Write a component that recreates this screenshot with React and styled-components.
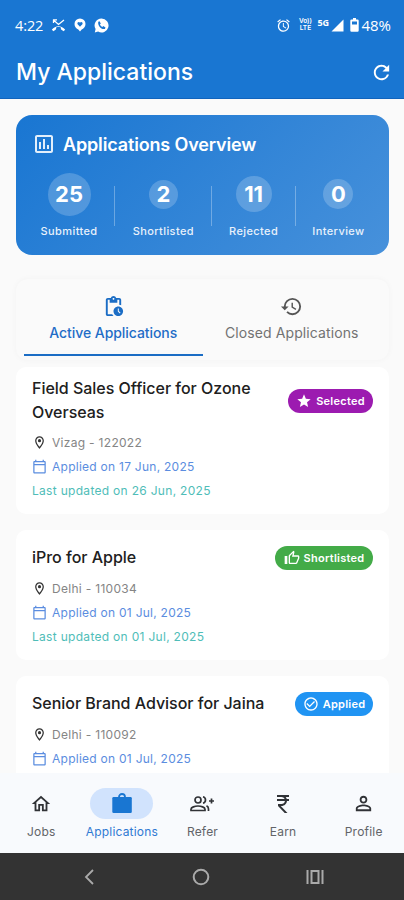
import React from "react";
import styled, { createGlobalStyle, css } from "styled-components";
import {
  MdAccessAlarm,
  MdCheckCircleOutline,
  MdCurrencyRupee,
  MdHistory,
  MdOutlineAssessment,
  MdOutlineCalendarToday,
  MdOutlineHome,
  MdOutlineLocationOn,
  MdOutlineThumbUp,
  MdPendingActions,
  MdPersonOutline,
  MdRefresh,
  MdStar,
} from "react-icons/md";

const stats = [
  { value: 25, label: "Submitted", size: 43, width: 58 },
  { value: 2, label: "Shortlisted", size: 29, width: 64 },
  { value: 11, label: "Rejected", size: 36, width: 50 },
  { value: 0, label: "Interview", size: 30, width: 53 },
];

const applications = [
  {
    title: "Field Sales Officer for Ozone Overseas",
    place: "Vizag - 122022",
    applied: "17 Jun, 2025",
    updated: "26 Jun, 2025",
    status: "Selected",
    icon: <MdStar size={16} />,
    color: "#9c1bb0",
    badgeWidth: 85,
  },
  {
    title: "iPro for Apple",
    place: "Delhi - 110034",
    applied: "01 Jul, 2025",
    updated: "01 Jul, 2025",
    status: "Shortlisted",
    icon: <MdOutlineThumbUp size={16} />,
    color: "#43ab48",
    badgeWidth: 98,
  },
  {
    title: "Senior Brand Advisor for Jaina",
    place: "Delhi - 110092",
    applied: "01 Jul, 2025",
    status: "Applied",
    icon: <MdCheckCircleOutline size={16} />,
    color: "#2094f3",
    badgeWidth: 78,
  },
];

const BagIcon = () => (
  <svg width="24" height="24" viewBox="0 0 24 24">
    <path d="M9 7V5a3 3 0 0 1 6 0v2" fill="none" stroke="currentColor" strokeWidth="1.800" />
    <rect x="2.300" y="5" width="19.500" height="16" rx="1.200" fill="currentColor" />
  </svg>
);

const ReferIcon = () => (
  <svg width="26" height="24" viewBox="0 0 26 24" fill="none" stroke="currentColor" strokeWidth="1.700">
    <circle cx="9" cy="8" r="3" />
    <path d="M2 18.500v-1.300c0-2 4-3.200 7-3.200s7 1.200 7 3.200v1.300z" />
    <path d="M14 4.800a3.300 3.300 0 0 1 0 6.400M17.500 13.800c1.400.7 2 1.800 2 3.200v2" />
    <path d="M22.500 6.500v5M20 9h5" />
  </svg>
);

const navItems = [
  { label: "Jobs", icon: <MdOutlineHome size={22} /> },
  { label: "Applications", icon: <BagIcon />, active: true },
  { label: "Refer", icon: <ReferIcon /> },
  { label: "Earn", icon: <MdCurrencyRupee size={24} /> },
  { label: "Profile", icon: <MdPersonOutline size={23} /> },
];

const MissedCallIcon = () => (
  <svg width="15" height="14" viewBox="0 0 15 14" fill="none" stroke="#fff">
    <path d="M2.500 1.500v3.500M2 1.800H6M2.500 2l5 4.500L13 2" strokeWidth="1.300" />
    <path
      d="M.8 11.800l1.700 1.500 2.600-2V9.500c1.500-.6 3.300-.6 4.800 0v1.800l2.600 2 1.700-1.500C10.600 7 4.400 7 .8 11.800z"
      fill="#fff"
      stroke="none"
    />
  </svg>
);

const ChatPinIcon = () => (
  <svg width="12" height="14" viewBox="0 0 12 14">
    <path
      d="M6 .5a5.500 5.500 0 0 1 5.500 5.500c0 3-2 4.800-3.800 5.400L6 13.500l-1.700-2.100C2.500 10.800.5 9 .5 6A5.500 5.500 0 0 1 6 .5z"
      fill="#fff"
    />
    <path d="M6 8.700 3.600 6.300a1.400 1.400 0 0 1 2.400-1.500 1.400 1.400 0 0 1 2.400 1.500z" fill="#1976d2" />
  </svg>
);

const PhoneCircleIcon = () => (
  <svg width="15" height="15" viewBox="0 0 15 15">
    <path d="M7.500.5a7 7 0 1 1-3.400 13.100L.8 14.500l.8-3.400A7 7 0 0 1 7.500.5z" fill="#fff" />
    <path
      d="M4.300 3.800 5.500 3.200l1.300 2.300-.9 1c.5 1.100 1.300 1.900 2.400 2.500l1-.9 2.200 1.300-.6 1.500c-3.200 1.200-7.600-3.200-6.600-7.100z"
      fill="#1976d2"
    />
  </svg>
);

const BatteryIcon = () => (
  <svg width="9" height="14" viewBox="0 0 9 14">
    <path
      fill="#fff"
      fillRule="evenodd"
      d="M3 0h3v1.500h1.500A1.200 1.200 0 0 1 8.700 2.700v9.800a1.200 1.200 0 0 1-1.200 1.200h-6A1.200 1.200 0 0 1 .3 12.500V2.700a1.200 1.200 0 0 1 1.200-1.200H3zM2 3.500v3h5v-3z"
    />
  </svg>
);

const App = () => {
  return (
    <>
      <GlobalStyle />
      <Screen>
        <Header>
          <StatusBar>
            <StatusLeft>
              <Clock>4:22</Clock>
              <MissedCallIcon />
              <ChatPinIcon />
              <PhoneCircleIcon />
            </StatusLeft>
            <StatusRight>
              <MdAccessAlarm size={15} />
              <Volte>
                <span>Vo))</span>
                <span>LTE</span>
              </Volte>
              <FiveG>5G</FiveG>
              <svg width="13" height="13" viewBox="0 0 13 13">
                <path d="M12.500.5v12H.5z" fill="#fff" />
              </svg>
              <Battery>
                <BatteryIcon />
                <span>48%</span>
              </Battery>
            </StatusRight>
          </StatusBar>
          <AppBar>
            <PageTitle>My Applications</PageTitle>
            <MdRefresh size={23} />
          </AppBar>
        </Header>

        <Body>
          <Overview>
            <OverviewTitle>
              <MdOutlineAssessment size={24} />
              <span>Applications Overview</span>
            </OverviewTitle>
            <Stats>
              {stats.map((stat, i) => (
                <React.Fragment key={stat.label}>
                  {i > 0 && <Divider />}
                  <Stat $width={stat.width}>
                    <Bubble>
                      <Circle $size={stat.size}>{stat.value}</Circle>
                    </Bubble>
                    <StatLabel>{stat.label}</StatLabel>
                  </Stat>
                </React.Fragment>
              ))}
            </Stats>
          </Overview>

          <Tabs>
            <Tab $active>
              <MdPendingActions size={23} />
              <span>Active Applications</span>
            </Tab>
            <Tab>
              <MdHistory size={23} />
              <span>Closed Applications</span>
            </Tab>
          </Tabs>

          <List>
            {applications.map((item, i) => (
              <Card key={item.title} $first={i === 0}>
                <CardHead>
                  <JobTitle>{item.title}</JobTitle>
                  <Badge $color={item.color} $width={item.badgeWidth}>
                    {item.icon}
                    <span>{item.status}</span>
                  </Badge>
                </CardHead>
                <Place>
                  <MdOutlineLocationOn size={15} />
                  <span>{item.place}</span>
                </Place>
                <Applied>
                  <MdOutlineCalendarToday size={15} />
                  <span>Applied on {item.applied}</span>
                </Applied>
                {item.updated && (
                  <Updated>Last updated on {item.updated}</Updated>
                )}
              </Card>
            ))}
          </List>
        </Body>

        <Nav>
          {navItems.map((item) => (
            <NavItem key={item.label} $active={item.active}>
              <NavPill $active={item.active}>{item.icon}</NavPill>
              <span>{item.label}</span>
            </NavItem>
          ))}
        </Nav>

        <SystemBar>
          <svg width="12" height="18" viewBox="0 0 12 18">
            <path d="M10 2 3 9l7 7" fill="none" stroke="currentColor" strokeWidth="1.800" />
          </svg>
          <svg width="18" height="18" viewBox="0 0 18 18">
            <circle cx="9" cy="9" r="7.300" fill="none" stroke="currentColor" strokeWidth="2" />
          </svg>
          <svg width="18" height="16" viewBox="0 0 18 16">
            <path
              d="M1.500 1v14M16.500 1v14M5.500 2h7v12h-7z"
              fill="none"
              stroke="currentColor"
              strokeWidth="2"
            />
          </svg>
        </SystemBar>
      </Screen>
    </>
  );
};

export default App;

const GlobalStyle = createGlobalStyle`
  * {
    box-sizing: border-box;
  }
  body {
    margin: 0;
    font-family: Inter, "Liberation Sans", sans-serif;
    background: #fafafa;
  }
  svg {
    flex-shrink: 0;
  }
`;

const Screen = styled.div`
  width: 404px;
  height: 900px;
  display: flex;
  flex-direction: column;
  overflow: hidden;
  background: #fafafa;
`;

const Header = styled.header`
  height: 99px;
  flex-shrink: 0;
  color: #fff;
  background: #1976d2;
  border-bottom: 1px solid #1164bd;
`;

const StatusBar = styled.div`
  height: 50px;
  padding: 0 13px 0 15px;
  display: flex;
  align-items: center;
  justify-content: space-between;
  font-family: "Open Sans", "Noto Sans", sans-serif;
`;

const StatusLeft = styled.div`
  display: flex;
  align-items: center;
  gap: 8px;
`;

const Clock = styled.span`
  width: 28px;
  font-size: 14.500px;
  font-weight: 500;
  letter-spacing: -0.1px;
`;

const StatusRight = styled.div`
  display: flex;
  align-items: center;
`;

const Volte = styled.div`
  width: 14px;
  margin-left: 7px;
  display: flex;
  flex-direction: column;
  align-items: center;
  font-family: Inter, sans-serif;
  font-size: 6.500px;
  font-weight: 600;
  line-height: 7px;
`;

const FiveG = styled.span`
  width: 12px;
  margin: 0 2px 6px 5px;
  font-size: 9px;
  line-height: 9px;
  font-weight: 700;
`;

const Battery = styled.div`
  margin-left: 6px;
  display: flex;
  align-items: center;
  gap: 2px;
  font-size: 15px;
  font-weight: 500;
`;

const AppBar = styled.div`
  height: 44px;
  padding: 0 11px 0 16px;
  display: flex;
  align-items: center;
  justify-content: space-between;
`;

const PageTitle = styled.h1`
  margin: 0;
  font-size: 23px;
  font-weight: 500;
`;

const Body = styled.main`
  flex: 1;
  min-height: 0;
  padding: 16px 15px 0 16px;
  display: flex;
  flex-direction: column;
  overflow: hidden;
`;

const Overview = styled.section`
  height: 140px;
  flex-shrink: 0;
  padding: 16px;
  color: #fff;
  border-radius: 16px;
  background: linear-gradient(135deg, #1976d2, #4791db);
`;

const OverviewTitle = styled.div`
  height: 26px;
  display: flex;
  align-items: center;
  gap: 7px;
  font-size: 18px;
  font-weight: 600;
  letter-spacing: -0.15px;
  svg {
    color: #e3effb;
  }
`;

const Stats = styled.div`
  margin-top: 14px;
  display: flex;
  justify-content: space-around;
`;

const Stat = styled.div`
  width: ${({ $width }) => $width}px;
  display: flex;
  flex-direction: column;
  align-items: center;
`;

const Bubble = styled.div`
  height: 46px;
  display: flex;
  align-items: center;
`;

const Circle = styled.div`
  width: ${({ $size }) => $size}px;
  height: ${({ $size }) => $size}px;
  display: flex;
  align-items: center;
  justify-content: center;
  border-radius: 50%;
  background: rgba(255, 255, 255, 0.2);
  font-size: 22px;
  font-weight: 700;
`;

const StatLabel = styled.span`
  margin-top: 7px;
  font-size: 11px;
  line-height: 15px;
  font-weight: 500;
  letter-spacing: 0.4px;
  white-space: nowrap;
  color: #e8f1fb;
`;

const Divider = styled.div`
  width: 1px;
  height: 40px;
  margin-top: 15px;
  background: rgba(255, 255, 255, 0.3);
`;

const Tabs = styled.div`
  height: 81px;
  flex-shrink: 0;
  margin-top: 24px;
  padding: 0 8px;
  display: flex;
  border-radius: 12px;
  background: #fafafa;
  box-shadow: 0 0 6px rgba(0, 0, 0, 0.035);
`;

const Tab = styled.div`
  flex: 1;
  height: 77px;
  padding-top: 16px;
  display: flex;
  flex-direction: column;
  align-items: center;
  gap: 5px;
  font-size: 14px;
  line-height: 20px;
  font-weight: 400;
  letter-spacing: 0.1px;
  color: #727272;
  svg {
    color: #555;
  }
  ${({ $active }) =>
    $active &&
    css`
      font-weight: 500;
      letter-spacing: -0.06px;
      color: #1f6dc7;
      border-bottom: 2px solid #1b6dc5;
      svg {
        color: #1b6dc5;
      }
    `}
`;

const List = styled.div`
  margin-top: 7px;
  display: flex;
  flex-direction: column;
  gap: 16px;
`;

const Card = styled.article`
  padding: ${({ $first }) => ($first ? 10 : 16)}px 16px 12px;
  border-radius: 10px;
  background: #fff;
`;

const CardHead = styled.div`
  margin-bottom: 7px;
  display: flex;
  align-items: center;
  justify-content: space-between;
`;

const JobTitle = styled.h2`
  width: 236px;
  margin: 0;
  font-size: 16px;
  line-height: 23.500px;
  font-weight: 500;
  letter-spacing: -0.02px;
  color: #202020;
`;

const Badge = styled.div`
  width: ${({ $width }) => $width}px;
  height: 24px;
  flex-shrink: 0;
  display: flex;
  align-items: center;
  justify-content: center;
  gap: 4px;
  border-radius: 12px;
  color: #fff;
  background: ${({ $color }) => $color};
  font-size: 11px;
  font-weight: 600;
  letter-spacing: 0.25px;
`;

const Row = styled.div`
  height: 23.700px;
  display: flex;
  align-items: center;
  font-size: 12px;
  letter-spacing: 0.3px;
  white-space: nowrap;
`;

const Place = styled(Row)`
  gap: 5px;
  color: #858585;
  letter-spacing: 0.3px;
  svg {
    color: #333;
  }
`;

const Applied = styled(Row)`
  gap: 5px;
  letter-spacing: 0.26px;
  color: #5b8de0;
`;

const Updated = styled(Row)`
  color: #4fbdb8;
`;

const Nav = styled.nav`
  height: 80px;
  flex-shrink: 0;
  padding-left: 1px;
  display: flex;
  background: #f8fafd;
`;

const NavItem = styled.div`
  flex: 1;
  padding-top: 15px;
  display: flex;
  flex-direction: column;
  align-items: center;
  gap: 4px;
  font-size: 12px;
  line-height: 17px;
  letter-spacing: 0.2px;
  color: ${({ $active }) => ($active ? "#2f79d3" : "#626468")};
`;

const NavPill = styled.div`
  width: 63px;
  height: 31px;
  display: flex;
  align-items: center;
  justify-content: center;
  border-radius: 16px;
  color: ${({ $active }) => ($active ? "#1976d2" : "#303236")};
  background: ${({ $active }) => ($active ? "#d1e3fd" : "transparent")};
`;

const SystemBar = styled.div`
  height: 47px;
  flex-shrink: 0;
  padding: 0 80px 0 83px;
  display: flex;
  align-items: center;
  justify-content: space-between;
  color: #aaa;
  background: #333;
`;
